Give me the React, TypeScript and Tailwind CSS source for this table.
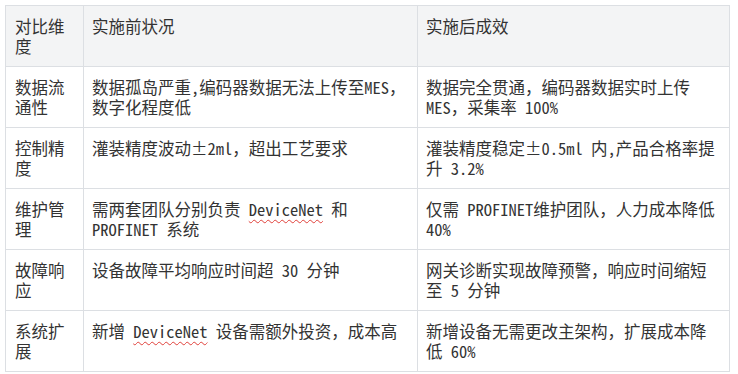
const rows: { dim: string; before: React.ReactNode; after: React.ReactNode }[] = [
  {
    dim: '数据流通性',
    before: '数据孤岛严重,编码器数据无法上传至MES，数字化程度低',
    after: '数据完全贯通，编码器数据实时上传 MES，采集率 100%',
  },
  {
    dim: '控制精度',
    before: '灌装精度波动±2ml，超出工艺要求',
    after: '灌装精度稳定±0.5ml 内,产品合格率提升 3.2%',
  },
  {
    dim: '维护管理',
    before: (
      <>
        需两套团队分别负责 <Spell>DeviceNet</Spell> 和 PROFINET 系统
      </>
    ),
    after: '仅需 PROFINET维护团队，人力成本降低 40%',
  },
  {
    dim: '故障响应',
    before: '设备故障平均响应时间超 30 分钟',
    after: '网关诊断实现故障预警，响应时间缩短至 5 分钟',
  },
  {
    dim: '系统扩展',
    before: (
      <>
        新增 <Spell>DeviceNet</Spell> 设备需额外投资，成本高
      </>
    ),
    after: '新增设备无需更改主架构，扩展成本降低 60%',
  },
];

function Spell({ children }: { children: React.ReactNode }) {
  return (
    <span className="underline decoration-wavy decoration-[#e0403a] decoration-1 underline-offset-[3px]">
      {children}
    </span>
  );
}

export default function App() {
  return (
    <div
      className="w-[738px] h-[374px] bg-white p-[5px] text-[#333] text-[16.5px] leading-[20px]"
      style={{ fontFamily: '"Noto Sans Mono CJK SC", "Noto Sans CJK SC", monospace' }}
    >
      <table className="w-[724px] table-fixed border-collapse">
        <colgroup>
          <col className="w-[78px]" />
          <col className="w-[334px]" />
          <col className="w-[312px]" />
        </colgroup>
        <thead>
          <tr className="bg-[#f3f4f5]">
            <th className="border border-[#dcdfe3] pl-[9px] pr-2 py-[10px] h-[61px] text-left font-normal align-top">
              对比维度
            </th>
            <th className="border border-[#dcdfe3] pl-[8px] pr-2 py-[10px] text-left font-normal align-top">
              实施前状况
            </th>
            <th className="border border-[#dcdfe3] pl-[8px] pr-2 py-[10px] text-left font-normal align-top">
              实施后成效
            </th>
          </tr>
        </thead>
        <tbody>
          {rows.map((r) => (
            <tr key={r.dim}>
              <td className="border border-[#dcdfe3] pl-[9px] pr-2 py-[10px] h-[61px] align-top">{r.dim}</td>
              <td className="border border-[#dcdfe3] pl-[8px] pr-2 py-[10px] align-top">{r.before}</td>
              <td className="border border-[#dcdfe3] pl-[8px] pr-2 py-[10px] align-top">{r.after}</td>
            </tr>
          ))}
        </tbody>
      </table>
    </div>
  );
}
